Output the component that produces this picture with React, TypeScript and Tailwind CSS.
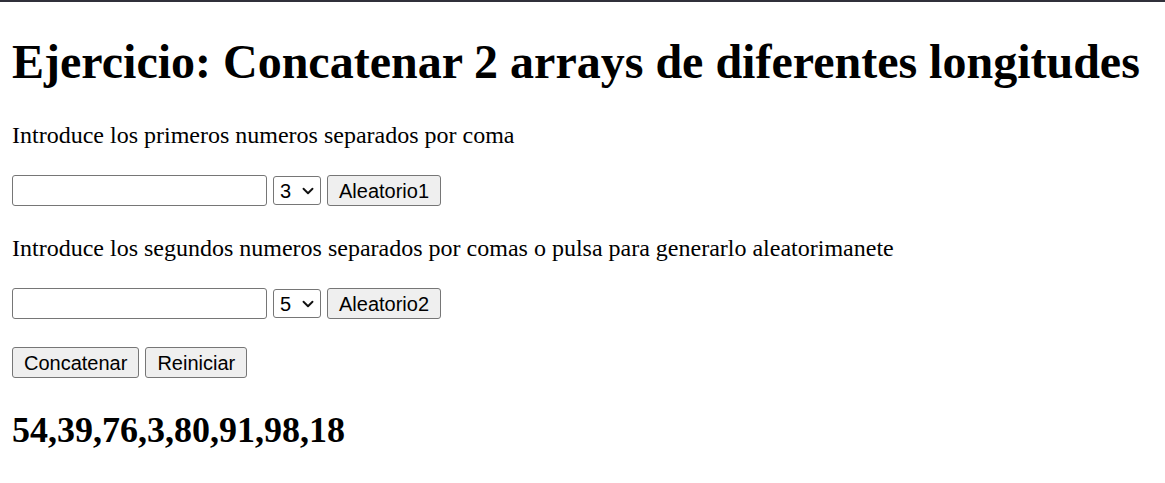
import { ChevronDown } from "lucide-react";

const serif = "font-['Liberation_Serif','Times_New_Roman',serif]";
const sans = "font-['Liberation_Sans',Arial,sans-serif]";

function TextBox() {
  return (
    <input
      type="text"
      className={`${sans} h-[31px] w-[255px] rounded-[3px] border border-[#767676] bg-white px-[3px] text-[20px] text-black outline-none`}
    />
  );
}

function CountSelect({ value }: { value: string }) {
  return (
    <div
      className={`${sans} flex h-[29px] w-[48px] items-center justify-between rounded-[3px] border border-[#767676] bg-white pl-[6px] pr-[3px] text-[20px] text-black`}
    >
      <span>{value}</span>
      <ChevronDown size={18} strokeWidth={2.5} className="text-[#111]" />
    </div>
  );
}

function Btn({ label }: { label: string }) {
  return (
    <button
      type="button"
      className={`${sans} h-[31px] rounded-[3px] border border-[#767676] bg-[#efefef] px-[11px] text-[20px] leading-none text-black`}
    >
      {label}
    </button>
  );
}

export default function App() {
  return (
    <div className={`${serif} min-h-[483px] bg-white text-black`}>
      <div className="h-[2px] bg-[#30303a]" />
      <div className="px-[12px]">
        <h1 className="mt-[32px] text-[48px] font-bold leading-[55px]">
          Ejercicio: Concatenar 2 arrays de diferentes longitudes
        </h1>
        <p className="mt-[32px] text-[24px] leading-[28px]">
          Introduce los primeros numeros separados por coma
        </p>
        <div className="mt-[26px] flex items-center gap-[6px]">
          <TextBox />
          <CountSelect value="3" />
          <Btn label="Aleatorio1" />
        </div>
        <p className="mt-[28px] text-[24px] leading-[28px]">
          Introduce los segundos numeros separados por comas o pulsa para generarlo aleatorimanete
        </p>
        <div className="mt-[26px] flex items-center gap-[6px]">
          <TextBox />
          <CountSelect value="5" />
          <Btn label="Aleatorio2" />
        </div>
        <div className="mt-[28px] flex items-center gap-[6px]">
          <Btn label="Concatenar" />
          <Btn label="Reiniciar" />
        </div>
        <h2 className="mt-[32px] text-[36px] font-bold leading-[41px]">
          54,39,76,3,80,91,98,18
        </h2>
      </div>
    </div>
  );
}
